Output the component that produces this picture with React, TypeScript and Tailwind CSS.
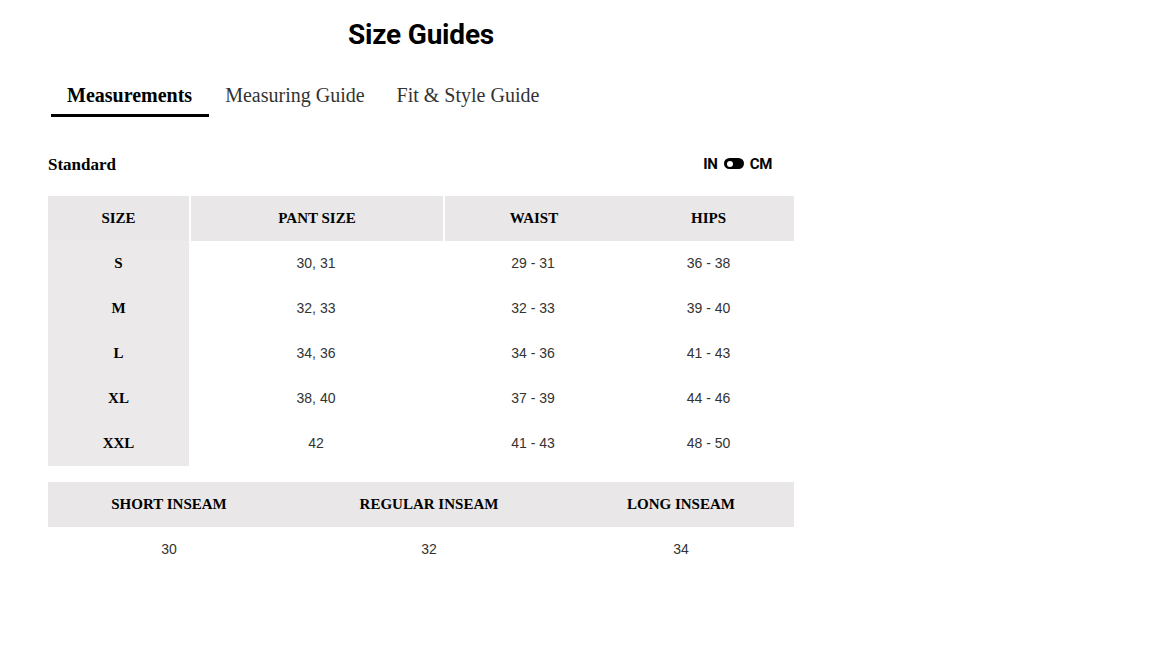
const rows = [
  ["S", "30, 31", "29 - 31", "36 - 38"],
  ["M", "32, 33", "32 - 33", "39 - 40"],
  ["L", "34, 36", "34 - 36", "41 - 43"],
  ["XL", "38, 40", "37 - 39", "44 - 46"],
  ["XXL", "42", "41 - 43", "48 - 50"],
];

const tabs = ["Measurements", "Measuring Guide", "Fit & Style Guide"];

const serif = "font-['Liberation_Serif',serif]";
const sans = "font-['Liberation_Sans',Arial,sans-serif]";

export default function App() {
  return (
    <div className="min-h-screen bg-white text-black">
      <div className="ml-12 w-[746px] pt-[17px]">
        <h1 className="text-center font-['Roboto',sans-serif] text-[28px] font-bold leading-9 tracking-[-0.2px]">
          Size Guides
        </h1>

        <nav className="ml-[3px] mt-[25px] flex">
          {tabs.map((t, i) => (
            <button
              key={t}
              className={`px-4 pb-[7px] pt-[5px] ${serif} text-[20px] leading-6 ${
                i === 0 ? "border-b-[3px] border-black pr-[17px] font-bold" : "border-b-[3px] border-transparent text-[#333]"
              }`}
            >
              {t}
            </button>
          ))}
        </nav>

        <div className="mt-[35px] flex items-center justify-between">
          <span className={`${serif} text-[17px] font-bold`}>Standard</span>
          <div className="mb-[2px] mr-[22px] flex items-center gap-[6px] font-['Roboto',sans-serif] text-[15px] font-bold tracking-[-0.3px]">
            <span>IN</span>
            <span className="flex h-[11px] w-5 items-center rounded-full bg-black pl-[3px]">
              <span className="h-[6px] w-[6px] rounded-full bg-white" />
            </span>
            <span>CM</span>
          </div>
        </div>

        <div className="mt-[18px] grid grid-cols-[141px_254px_180px_171px]">
          <div className={`flex h-[45px] items-center justify-center bg-[#e9e7e7] ${serif} text-[15px] font-bold`}>SIZE</div>
          <div className={`flex h-[45px] items-center justify-center border-l-2 border-white bg-[#e9e7e7] ${serif} text-[15px] font-bold`}>PANT SIZE</div>
          <div className={`flex h-[45px] items-center justify-center border-l-2 border-white bg-[#e9e7e7] ${serif} text-[15px] font-bold`}>WAIST</div>
          <div className={`flex h-[45px] items-center justify-center bg-[#e9e7e7] ${serif} text-[15px] font-bold`}>HIPS</div>
          {rows.map((r) => (
            <div key={r[0]} className="contents">
              <div className={`flex h-[45px] items-center justify-center bg-[#ebe9e9] ${serif} text-[15px] font-bold`}>{r[0]}</div>
              <div className={`flex h-[45px] items-center justify-center ${sans} text-[14px] text-[#333]`}>{r[1]}</div>
              <div className={`flex h-[45px] items-center justify-center ${sans} text-[14px] text-[#333]`}>{r[2]}</div>
              <div className={`flex h-[45px] items-center justify-center ${sans} text-[14px] text-[#333]`}>{r[3]}</div>
            </div>
          ))}
        </div>

        <div className="mt-4 grid grid-cols-[242px_278px_226px]">
          {["SHORT INSEAM", "REGULAR INSEAM", "LONG INSEAM"].map((h) => (
            <div key={h} className={`flex h-[45px] items-center justify-center bg-[#e9e7e7] ${serif} text-[15px] font-bold`}>
              {h}
            </div>
          ))}
          {["30", "32", "34"].map((v) => (
            <div key={v} className={`flex h-[45px] items-center justify-center ${sans} text-[14px] text-[#333]`}>
              {v}
            </div>
          ))}
        </div>
      </div>
    </div>
  );
}
